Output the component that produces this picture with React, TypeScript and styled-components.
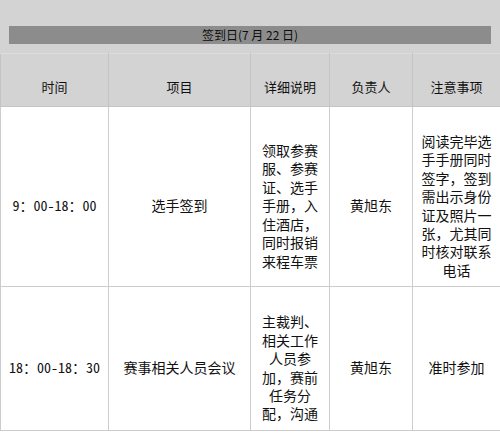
import styled, { createGlobalStyle } from 'styled-components'

const GlobalStyle = createGlobalStyle`
  html, body {
    margin: 0;
    padding: 0;
    background: #ffffff;
  }
  body {
    font-family: "Noto Sans CJK SC", "Noto Sans", sans-serif;
    color: #111111;
  }
`

const Page = styled.div`
  width: 500px;
`

const TopBand = styled.div`
  background: #d3d3d3;
  padding: 26px 9px 9px;
`

const TitleBar = styled.div`
  height: 18px;
  background: #8c8c8c;
  color: #0c0c0c;
  font-size: 12px;
  line-height: 18px;
  text-align: center;
`

const Table = styled.table`
  width: 500px;
  table-layout: fixed;
  border-collapse: collapse;
  font-size: 14px;
`

const HeadRow = styled.tr`
  height: 53px;
  background: #d3d3d3;
`

const BodyRow = styled.tr<{ $height: number }>`
  height: ${(p) => p.$height}px;
  background: #ffffff;
`

const HeadCell = styled.th`
  border: 1px solid #c4c4c4;
  border-top-color: #dcdcdc;
  font-weight: 400;
  font-size: 13px;
  line-height: 18px;
  vertical-align: bottom;
  padding: 0 0 10px;
  color: #111111;
`

const Cell = styled.td<{ $pad?: number }>`
  border: 1px solid #cccccc;
  text-align: center;
  vertical-align: middle;
  line-height: 18.4px;
  padding: 18px ${(p) => p.$pad ?? 4}px 0;
  word-break: break-all;
`

const TimeText = styled.span`
  font-feature-settings: "hwid";
  letter-spacing: 0;
`

const columns = [108, 142, 79, 83, 88]

const rows = [
  {
    height: 180,
    time: '9：00-18：00',
    item: '选手签到',
    detail: '领取参赛服、参赛证、选手手册，入住酒店，同时报销来程车票',
    owner: '黄旭东',
    note: '阅读完毕选手手册同时签字，签到需出示身份证及照片一张，尤其同时核对联系电话',
  },
  {
    height: 144,
    time: '18：00-18：30',
    item: '赛事相关人员会议',
    detail: '主裁判、相关工作人员参加，赛前任务分配，沟通',
    owner: '黄旭东',
    note: '准时参加',
  },
]

export default function App() {
  return (
    <Page>
      <GlobalStyle />
      <TopBand>
        <TitleBar>签到日(7 月 22 日)</TitleBar>
      </TopBand>
      <Table>
        <colgroup>
          {columns.map((w, i) => (
            <col key={i} style={{ width: w }} />
          ))}
        </colgroup>
        <thead>
          <HeadRow>
            <HeadCell>时间</HeadCell>
            <HeadCell>项目</HeadCell>
            <HeadCell>详细说明</HeadCell>
            <HeadCell>负责人</HeadCell>
            <HeadCell>注意事项</HeadCell>
          </HeadRow>
        </thead>
        <tbody>
          {rows.map((r) => (
            <BodyRow key={r.time} $height={r.height}>
              <Cell>
                <TimeText>{r.time}</TimeText>
              </Cell>
              <Cell>{r.item}</Cell>
              <Cell $pad={7}>{r.detail}</Cell>
              <Cell>{r.owner}</Cell>
              <Cell $pad={5}>{r.note}</Cell>
            </BodyRow>
          ))}
        </tbody>
      </Table>
    </Page>
  )
}
